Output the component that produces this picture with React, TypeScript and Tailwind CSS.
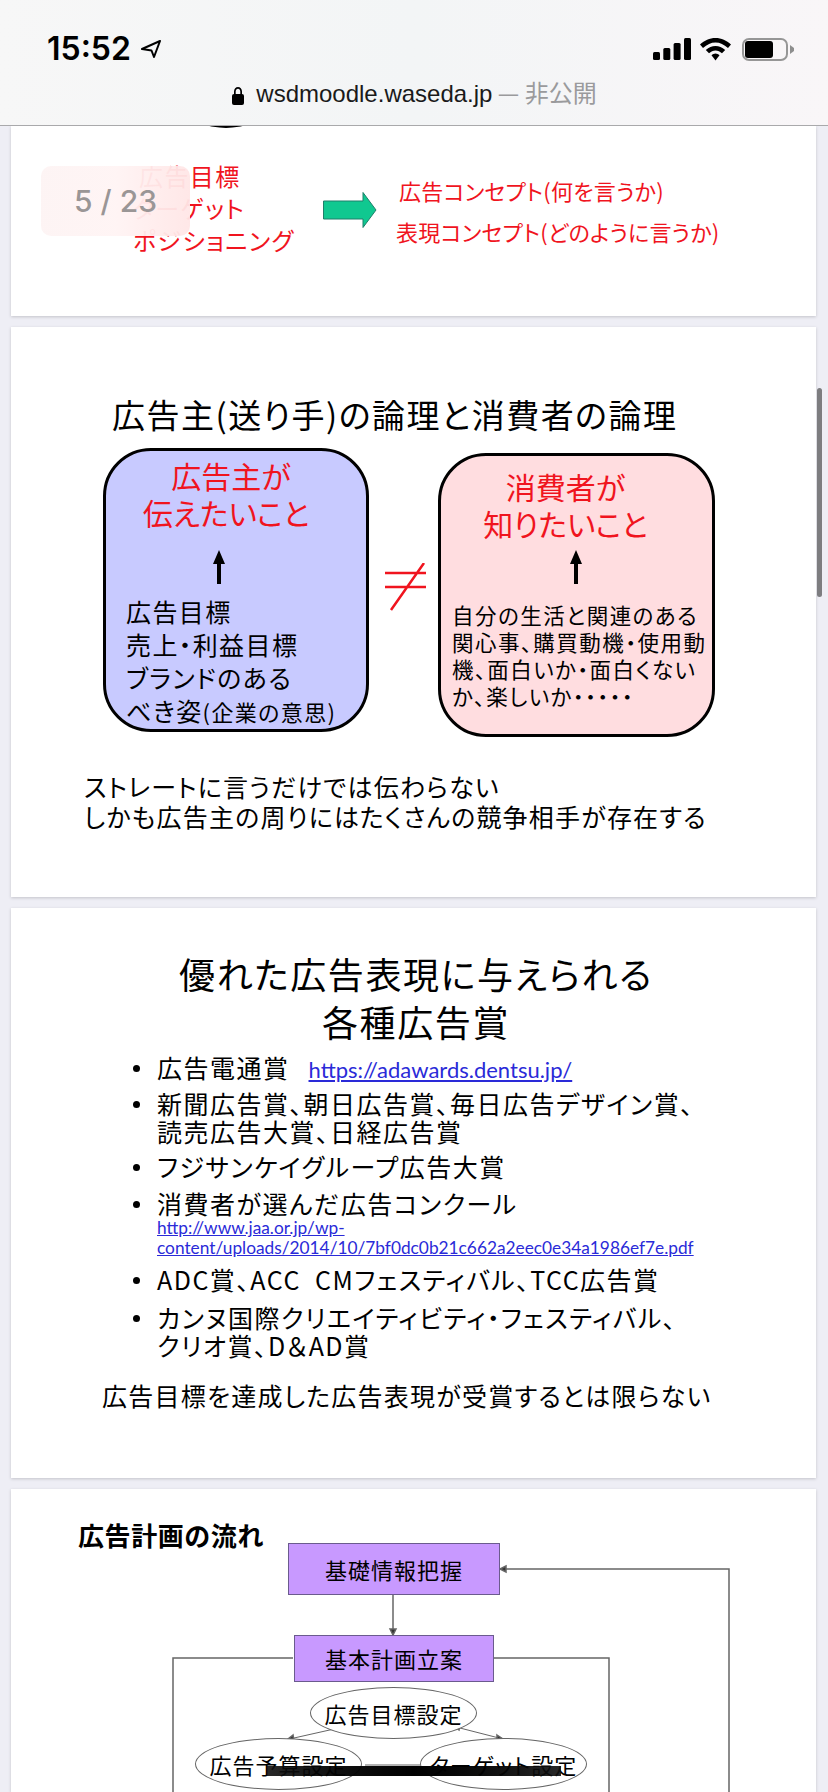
import type { ReactNode } from "react"

const JP = "font-['Noto_Sans_CJK_JP','Noto_Sans',sans-serif] [font-feature-settings:'palt']"
const CARD = "bg-white shadow-[0_1px_3px_rgba(0,0,0,0.18)] shrink-0 overflow-hidden"

function UpArrow() {
  return (
    <svg width="16" height="34" viewBox="0 0 16 34" className="block">
      <path d="M8 0 L14 14 L10 14 L10 34 L6 34 L6 14 L2 14 Z" fill="#000" />
    </svg>
  )
}

function StatusBar() {
  return (
    <div className="flex items-start justify-between pl-[47px] pr-[34px] pt-[36px] h-[74px]">
      <div className="flex items-center gap-[10px]">
        <span className="font-['Inter',sans-serif] font-semibold text-[32px] leading-[26px] text-black">15:52</span>
        <svg width="20" height="18" viewBox="0 0 20 18" fill="none" stroke="#000" strokeWidth="2" strokeLinejoin="round">
          <path d="M19 1 L1 9 L10.500 10.500 L13 17 Z" />
        </svg>
      </div>
      <div className="flex items-center gap-[8px] h-[26px]">
        <svg width="38" height="22" viewBox="0 0 38 22" fill="#000">
          <rect x="0" y="14" width="7" height="8" rx="1.500" />
          <rect x="10.300" y="10" width="7" height="12" rx="1.500" />
          <rect x="20.600" y="5" width="7" height="17" rx="1.500" />
          <rect x="31" y="0" width="7" height="22" rx="1.500" />
        </svg>
        <svg width="33" height="24" viewBox="0 0 32 24" fill="#000">
          <path d="M16 1 C10 1 5 3.500 0.500 7.500 L3.500 11 C7.500 7.500 11.500 5.500 16 5.500 C20.500 5.500 24.500 7.500 28.500 11 L31.500 7.500 C27 3.500 22 1 16 1 Z" />
          <path d="M16 9 C12.500 9 9.300 10.500 6.300 13 L9.500 16.300 C11.400 14.700 13.600 13.500 16 13.500 C18.400 13.500 20.600 14.700 22.500 16.300 L25.700 13 C22.700 10.500 19.500 9 16 9 Z" />
          <path d="M16 16.500 C14.500 16.500 13.300 17.200 12 18.300 L16 23.500 L20 18.300 C18.700 17.200 17.500 16.500 16 16.500 Z" />
        </svg>
        <div className="flex items-center gap-[2px] ml-[2px]">
          <div className="w-[46px] h-[23px] rounded-[7px] border-2 border-[#969696] p-[1px]">
            <div className="w-[28px] h-full rounded-[3px] bg-black" />
          </div>
          <svg width="4" height="9" viewBox="0 0 4 9" fill="#8e8e8e">
            <path d="M0 0 L4 3 V6 L0 9 Z" />
          </svg>
        </div>
      </div>
    </div>
  )
}

function Header() {
  return (
    <div className="h-[126px] shrink-0 bg-gradient-to-r from-[#f7f7f7] via-[#f3f5f6] to-[#f9f6f8] border-b border-[#a9a9ab] relative z-10">
      <StatusBar />
      <div className="flex items-center justify-center gap-[11px] h-[42px]">
        <svg width="14" height="19" viewBox="0 0 14 19" fill="#000">
          <path d="M3 8 V5.500 C3 2.800 4.800 1 7 1 C9.200 1 11 2.800 11 5.500 V8 H9.300 V5.500 C9.300 3.800 8.300 2.700 7 2.700 C5.700 2.700 4.700 3.800 4.700 5.500 V8 Z" />
          <rect x="1" y="8" width="12" height="11" rx="2" />
        </svg>
        <div className={`${JP} text-[24px] leading-[28px] whitespace-nowrap -mt-[4px]`}>
          <span className="font-['Liberation_Sans',sans-serif] text-[#1a1a1a]">wsdmoodle.waseda.jp</span>
          <span className="text-[#9a9a9c]"> — 非公開</span>
        </div>
      </div>
    </div>
  )
}

function SlideOne() {
  return (
    <div className={`${JP} ${CARD} h-[190px] text-[#f0141e]`}>
      <div className="-mt-[28px] ml-[182px] w-[66px] h-[30px] rounded-[50%] bg-black" />
      <div className="flex items-start pt-[32px] pl-[122px]">
        <div className="w-[190px] text-[24px] leading-[32px] tracking-[1.400px] whitespace-nowrap">
          <div className="ml-[6px]">広告目標</div>
          <div>ターゲット</div>
          <div>ポジショニング</div>
        </div>
        <svg width="54" height="36" viewBox="0 0 54 36" className="mt-[32px]">
          <path d="M0.500 9 H40 V0.500 L53 18 L40 35.500 V27 H0.500 Z" fill="#10c890" stroke="#1f7f6a" strokeWidth="1" />
        </svg>
        <div className="ml-[19px] mt-[10px] text-[22px] leading-[41px] tracking-[0.250px] whitespace-nowrap">
          <div className="ml-[3px]">広告コンセプト(何を言うか)</div>
          <div>表現コンセプト(どのように言うか)</div>
        </div>
      </div>
    </div>
  )
}

function SlideTwo() {
  return (
    <div className={`${JP} ${CARD} h-[570px] text-black`}>
      <div className="pt-[67px] pl-[101px] text-[33px] leading-[40px] tracking-[1.500px] whitespace-nowrap">広告主(送り手)の論理と消費者の論理</div>
      <div className="flex items-start mt-[14px] pl-[92px]">
        <div className="w-[266px] h-[284px] rounded-[48px] border-[3px] border-black bg-[#c8caff] flex flex-col">
          <div className="pt-[6px] text-center text-[#f0141e] text-[30px] leading-[37px] whitespace-nowrap pr-[20px]">
            <div className="pl-[10px]">広告主が</div>
            <div>伝えたいこと</div>
          </div>
          <div className="pl-[105px] mt-[19px]"><UpArrow /></div>
          <div className="pl-[20px] mt-[11px] text-[25px] leading-[33px] tracking-[1.400px] whitespace-nowrap">
            <div>広告目標</div>
            <div>売上・利益目標</div>
            <div>ブランドのある</div>
            <div>べき姿<span className="text-[22px]">(企業の意思)</span></div>
          </div>
        </div>
        <svg width="42" height="48" viewBox="0 0 42 48" className="ml-[16px] mt-[115px]" fill="none" stroke="#f0141e" strokeWidth="2.500">
          <path d="M0 10 H41 M0 24 H41 M39 0 L6 47" />
        </svg>
        <div className="ml-[11px] mt-[5px] w-[277px] h-[284px] rounded-[48px] border-[3px] border-black bg-[#ffdde0] flex flex-col">
          <div className="pt-[12px] text-center text-[#f0141e] text-[30px] leading-[37px] whitespace-nowrap pr-[22px]">
            <div>消費者が</div>
            <div>知りたいこと</div>
          </div>
          <div className="pl-[127px] mt-[8px]"><UpArrow /></div>
          <div className="pl-[11px] mt-[17px] text-[21.500px] leading-[27px] tracking-[1.500px] whitespace-nowrap">
            <div>自分の生活と関連のある</div>
            <div>関心事、購買動機・使用動</div>
            <div>機、面白いか・面白くない</div>
            <div>か、楽しいか・・・・・</div>
          </div>
        </div>
      </div>
      <div className="mt-[34px] pl-[73px] text-[25px] leading-[30px] tracking-[1.200px] whitespace-nowrap">
        <div>ストレートに言うだけでは伝わらない</div>
        <div>しかも広告主の周りにはたくさんの競争相手が存在する</div>
      </div>
    </div>
  )
}

function Bullet({ children, className }: { children: ReactNode; className?: string }) {
  return (
    <div className={`flex ${className ?? ""}`}>
      <span className="w-[7px] h-[7px] rounded-full bg-black mt-[12px] ml-[122px] mr-[17px] shrink-0" />
      <div>{children}</div>
    </div>
  )
}

function SlideThree() {
  const link = "font-['Lato',sans-serif] text-[#2a2ad8] underline tracking-normal"
  return (
    <div className={`${JP} ${CARD} h-[570px] text-black`}>
      <div className="pt-[41px] pl-[5px] text-center text-[36px] leading-[48px] tracking-[1.600px]">
        <div>優れた広告表現に与えられる</div>
        <div>各種広告賞</div>
      </div>
      <div className="mt-[8px] text-[25px] leading-[28px] tracking-[1.500px] whitespace-nowrap">
        <Bullet className="h-[28px]">
          広告電通賞<span className={`${link} ml-[19px] text-[22px]`}>https://adawards.dentsu.jp/</span>
        </Bullet>
        <Bullet className="mt-[8px]">
          <div>新聞広告賞、朝日広告賞、毎日広告デザイン賞、</div>
          <div>読売広告大賞、日経広告賞</div>
        </Bullet>
        <Bullet className="mt-[7px]">フジサンケイグループ広告大賞</Bullet>
        <Bullet className="mt-[9px]">
          消費者が選んだ広告コンクール
          <div className={`${link} mt-[1px] text-[17.300px] leading-[20px]`}>
            <div>http://www.jaa.or.jp/wp-</div>
            <div>content/uploads/2014/10/7bf0dc0b21c662a2eec0e34a1986ef7e.pdf</div>
          </div>
        </Bullet>
        <Bullet className="mt-[7px]">ADC賞、ACC&nbsp;&nbsp;CMフェスティバル、TCC広告賞</Bullet>
        <Bullet className="mt-[10px]">
          <div>カンヌ国際クリエイティビティ・フェスティバル、</div>
          <div>クリオ賞、D＆AD賞</div>
        </Bullet>
      </div>
      <div className="mt-[21px] pl-[91px] text-[25px] leading-[30px] tracking-[1.250px] whitespace-nowrap">広告目標を達成した広告表現が受賞するとは限らない</div>
    </div>
  )
}

function Ellipse({ className, children }: { className: string; children: ReactNode }) {
  return (
    <div className={`absolute w-[167px] h-[52px] rounded-[50%] border border-[#666] bg-white flex items-center justify-center text-[22px] tracking-[1px] whitespace-nowrap ${className}`}>
      {children}
    </div>
  )
}

function SlideFour() {
  return (
    <div className={`${JP} ${CARD} h-[303px] text-black relative`}>
      <div className="pt-[29px] pl-[67px] text-[26px] leading-[34px] tracking-[0.600px] font-bold whitespace-nowrap">広告計画の流れ</div>
      {/* diagram connectors */}
      <svg className="absolute left-0 top-0" width="805" height="303" fill="none" stroke="#666" strokeWidth="1.500">
        <path d="M382 106 V146" />
        <path d="M379 140 L382 146 L385 140 Z" fill="#333" />
        <path d="M282 169 H162 V303 M483 169 H598 V303" />
        <path d="M718 303 V80 H489" />
        <path d="M495 77 L489 80 L495 83 Z" fill="#333" />
        <path d="M283 249 L332 238" strokeWidth="1" />
        <path d="M282 246 L277 250 L283 252 Z M329 235 L334 238 L331 241 Z" fill="#333" />
        <path d="M445 238 L488 249" strokeWidth="1" />
        <path d="M449 235 L444 238 L448 241 Z M486 246 L492 250 L486 252 Z" fill="#333" />
        <path d="M354 276 H409" strokeWidth="1" />
      </svg>
      <div className="absolute left-[277px] top-[54px] w-[212px] h-[52px] bg-[#c899ff] border border-[#6b5b8e] flex items-center justify-center text-[22px] tracking-[1px]">基礎情報把握</div>
      <div className="absolute left-[283px] top-[146px] w-[200px] h-[47px] bg-[#c899ff] border border-[#6b5b8e] flex items-center justify-center text-[22px] tracking-[1px]">基本計画立案</div>
      <Ellipse className="left-[299px] top-[198px]">広告目標設定</Ellipse>
      <Ellipse className="left-[184px] top-[249px]">広告予算設定</Ellipse>
      <Ellipse className="left-[409px] top-[249px]">ターゲット設定</Ellipse>
    </div>
  )
}

export default function App() {
  return (
    <div className="w-[828px] h-[1792px] bg-[#eeeef5] overflow-hidden relative">
      <Header />
      <div className="flex flex-col gap-[11px] pl-[11px] w-[816px]">
        <SlideOne />
        <SlideTwo />
        <SlideThree />
        <SlideFour />
      </div>
      {/* page counter */}
      <div className="absolute left-[41px] top-[166px] w-[149px] h-[70px] rounded-[10px] bg-gradient-to-r from-[#fdf3f3]/90 via-[#fff4f4]/95 to-[#ffe6e6]/95 flex items-center justify-center font-['Inter',sans-serif] font-medium text-[30px] text-[#9a9696] z-20">
        5 / 23
      </div>
      {/* scrollbar */}
      <div className="absolute left-[817px] top-[388px] w-[5px] h-[209px] rounded-full bg-[#7d7d80] z-20" />
      {/* home indicator */}
      <div className="absolute left-[267px] top-[1766px] w-[294px] h-[10px] bg-gradient-to-r from-[#111]/90 via-black to-[#111]/90 z-20" />
    </div>
  )
}
